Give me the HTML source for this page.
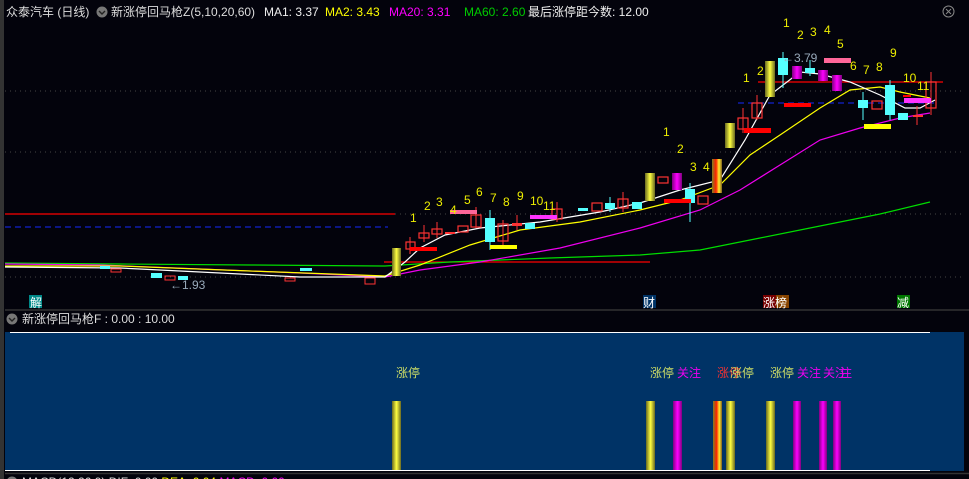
<!DOCTYPE html>
<html><head><meta charset="utf-8"><style>
body{margin:0;background:#03030c;width:969px;height:479px;overflow:hidden;font-family:"Liberation Sans","Noto Sans CJK SC",sans-serif}
svg{position:absolute;left:0;top:0}
</style></head><body>
<svg width="969" height="479" viewBox="0 0 969 479" font-family="Liberation Sans, Noto Sans CJK SC, sans-serif">
<defs>
<linearGradient id="gy" x1="0" x2="1"><stop offset="0" stop-color="#6a6a20"/><stop offset=".5" stop-color="#ffff40"/><stop offset="1" stop-color="#6a6a20"/></linearGradient>
<linearGradient id="gm" x1="0" x2="1"><stop offset="0" stop-color="#800080"/><stop offset=".5" stop-color="#ff00ff"/><stop offset="1" stop-color="#800080"/></linearGradient>
<linearGradient id="gr" x1="0" x2="1"><stop offset="0" stop-color="#808020"/><stop offset=".4" stop-color="#ff2000"/><stop offset=".7" stop-color="#ffee30"/><stop offset="1" stop-color="#806020"/></linearGradient>
</defs>
<rect x="0" y="0" width="4" height="479" fill="#333"/>
<!-- header -->
<text x="6" y="16" font-size="12" fill="#ddd">众泰汽车 (日线)</text>
<circle cx="102" cy="12" r="5.5" fill="#777"/><path d="M99 11l3 3 3-3" stroke="#222" fill="none" stroke-width="1.4"/>
<text x="111" y="16" font-size="12" fill="#ddd">新涨停回马枪Z(5,10,20,60)</text>
<text x="264" y="16" font-size="12" fill="#eee">MA1: 3.37</text>
<text x="325" y="16" font-size="12" fill="#ff0">MA2: 3.43</text>
<text x="389" y="16" font-size="12" fill="#f0f">MA20: 3.31</text>
<text x="464" y="16" font-size="12" fill="#0c0">MA60: 2.60</text>
<text x="528" y="16" font-size="12" fill="#eee">最后涨停距今数: 12.00</text>
<rect x="943" y="6" width="11" height="11" rx="5.5" fill="none" stroke="#888"/><path d="M946 9l5 5M951 9l-5 5" stroke="#888"/>
<!-- grid -->
<g stroke="#444" stroke-dasharray="1 4">
<line x1="5" y1="91" x2="965" y2="91"/><line x1="5" y1="152" x2="965" y2="152"/><line x1="5" y1="214" x2="965" y2="214"/><line x1="5" y1="277" x2="965" y2="277"/>
</g>
<line x1="5" y1="214" x2="395" y2="214" stroke="#f00" stroke-width="1.3"/>
<line x1="5" y1="227" x2="388" y2="227" stroke="#12c" stroke-dasharray="6 4" stroke-width="1.3"/>
<line x1="384" y1="262" x2="650" y2="262" stroke="#f00" stroke-width="1.3"/>
<line x1="758" y1="82" x2="943" y2="82" stroke="#f00" stroke-width="1.3"/>
<line x1="738" y1="103" x2="935" y2="103" stroke="#12c" stroke-dasharray="6 4" stroke-width="1.3"/>
<!-- MAs -->
<polyline fill="none" stroke="#0d0" stroke-width="1.2" points="5,263 120,264 250,265 385,266 450,262 550,258 640,255 700,250 760,238 820,226 880,214 930,202"/>
<polyline fill="none" stroke="#e0e" stroke-width="1.2" points="5,264 100,265 200,269 300,273 385,277 420,270 480,262 560,248 640,228 700,210 740,190 780,165 820,140 860,128 900,118 930,113"/>
<polyline fill="none" stroke="#ff0" stroke-width="1.2" points="5,266 120,266 250,271 385,276 420,265 470,245 520,230 580,222 640,210 680,200 720,185 750,155 780,135 820,108 850,90 880,87 900,92 930,98"/>
<polyline fill="none" stroke="#fff" stroke-width="1.2" points="5,267 120,268 200,272 300,277 385,277 405,262 420,248 445,235 480,228 540,222 600,212 640,203 680,190 720,180 745,140 770,95 800,72 820,74 850,82 880,95 905,108 920,108 935,100"/>
<!-- wicks -->
<g stroke="#f33"><line x1="410" y1="237" x2="410" y2="254"/><line x1="424" y1="225" x2="424" y2="242"/><line x1="437" y1="222" x2="437" y2="238"/><line x1="476" y1="207" x2="476" y2="228"/><line x1="503" y1="220" x2="503" y2="245"/><line x1="517" y1="215" x2="517" y2="230"/><line x1="557" y1="202" x2="557" y2="222"/><line x1="623" y1="192" x2="623" y2="212"/><line x1="743" y1="108" x2="743" y2="133"/><line x1="757" y1="95" x2="757" y2="120"/><line x1="931" y1="72" x2="931" y2="115"/><line x1="917" y1="106" x2="917" y2="125"/></g>
<g stroke="#5ff"><line x1="490" y1="210" x2="490" y2="250"/><line x1="610" y1="197" x2="610" y2="212"/><line x1="690" y1="183" x2="690" y2="222"/><line x1="783" y1="52" x2="783" y2="88"/><line x1="863" y1="92" x2="863" y2="120"/><line x1="890" y1="80" x2="890" y2="120"/><line x1="810" y1="60" x2="810" y2="76"/></g>
<!-- flat candles -->
<g fill="#5ff"><rect x="100" y="266" width="10" height="3"/><rect x="151" y="273" width="11" height="5"/><rect x="178" y="276" width="10" height="4"/><rect x="300" y="268" width="12" height="3"/></g>
<g fill="none" stroke="#f33"><rect x="111" y="269" width="10" height="3"/><rect x="165" y="276" width="10" height="4"/><rect x="285" y="278" width="10" height="3"/><rect x="365" y="278" width="10" height="6"/></g>
<text x="170" y="289" font-size="12" fill="#9ab">←1.93</text>
<!-- rising candles -->
<rect x="392" y="248" width="9" height="28" fill="url(#gy)"/>
<g fill="none" stroke="#f33" stroke-width="1.2">
<rect x="406" y="242" width="9" height="7"/><rect x="419" y="233" width="10" height="5"/><rect x="432" y="229" width="10" height="5"/><rect x="458" y="226" width="10" height="6"/><rect x="471" y="215" width="10" height="12"/><rect x="498" y="224" width="10" height="17"/><rect x="552" y="209" width="10" height="10"/><rect x="592" y="203" width="10" height="8"/><rect x="618" y="199" width="10" height="9"/><rect x="658" y="177" width="10" height="6"/><rect x="698" y="196" width="10" height="8"/><rect x="738" y="118" width="10" height="11"/><rect x="752" y="103" width="10" height="15"/><rect x="872" y="101" width="10" height="8"/><rect x="926" y="82" width="10" height="26"/>
</g>
<g fill="#f33"><rect x="445" y="232" width="10" height="2"/><rect x="512" y="223" width="10" height="3"/><rect x="913" y="115" width="10" height="2"/></g>
<g fill="#5ff"><rect x="485" y="218" width="10" height="24"/><rect x="525" y="223" width="10" height="6"/><rect x="578" y="208" width="10" height="3"/><rect x="605" y="203" width="10" height="6"/><rect x="632" y="202" width="10" height="7"/><rect x="685" y="189" width="10" height="14"/><rect x="778" y="58" width="10" height="17"/><rect x="805" y="68" width="10" height="5"/><rect x="858" y="100" width="10" height="8"/><rect x="885" y="85" width="10" height="30"/><rect x="898" y="113" width="10" height="7"/></g>
<g fill="url(#gy)"><rect x="645" y="173" width="10" height="28"/><rect x="725" y="123" width="10" height="25"/><rect x="765" y="61" width="10" height="36"/></g>
<rect x="712" y="159" width="10" height="34" fill="url(#gr)"/>
<g fill="url(#gm)"><rect x="672" y="173" width="10" height="17"/><rect x="792" y="66" width="10" height="13"/><rect x="818" y="70" width="10" height="11"/><rect x="832" y="75" width="10" height="16"/></g>
<!-- bars -->
<g fill="#f00"><rect x="410" y="247" width="27" height="4"/><rect x="664" y="199" width="27" height="4"/><rect x="744" y="128" width="27" height="5"/><rect x="784" y="103" width="27" height="4"/><rect x="903" y="95" width="8" height="2"/></g>
<rect x="450" y="210" width="27" height="4" fill="#f69"/><rect x="824" y="58" width="27" height="5" fill="#f69"/>
<rect x="490" y="245" width="27" height="4" fill="#ff0"/><rect x="864" y="124" width="27" height="5" fill="#ff0"/>
<rect x="530" y="215" width="27" height="4" fill="#f3f"/><rect x="904" y="98" width="27" height="5" fill="#f3f"/>
<!-- numbers -->
<g font-size="12" fill="#ee0">
<text x="410" y="222">1</text><text x="424" y="210">2</text><text x="436" y="206">3</text><text x="450" y="214">4</text><text x="464" y="204">5</text><text x="476" y="196">6</text><text x="490" y="202">7</text><text x="503" y="206">8</text><text x="517" y="200">9</text><text x="530" y="205">10</text><text x="543" y="210">11</text>
<text x="663" y="136">1</text><text x="677" y="153">2</text><text x="690" y="171">3</text><text x="703" y="171">4</text>
<text x="743" y="82">1</text><text x="757" y="75">2</text><text x="783" y="27">1</text><text x="797" y="39">2</text><text x="810" y="36">3</text><text x="824" y="34">4</text><text x="837" y="48">5</text><text x="850" y="70">6</text><text x="863" y="74">7</text><text x="876" y="71">8</text><text x="890" y="57">9</text><text x="903" y="82">10</text><text x="917" y="90">11</text>
</g>
<text x="782" y="62" font-size="12" fill="#9ab">←3.79</text>
<!-- markers -->
<rect x="29" y="295" width="13" height="13" fill="#088"/><text x="30" y="307" font-size="12" fill="#fff">解</text>
<rect x="643" y="295" width="13" height="13" fill="#036"/><text x="643" y="307" font-size="12" fill="#fff">财</text>
<rect x="763" y="295" width="13" height="13" fill="#700"/><rect x="776" y="295" width="13" height="13" fill="#840"/><text x="763" y="307" font-size="12" fill="#fff">涨榜</text>
<rect x="897" y="295" width="13" height="13" fill="#070"/><text x="897" y="307" font-size="12" fill="#fff">减</text>
<line x1="5" y1="310" x2="969" y2="310" stroke="#333" stroke-width="1.5"/>
<!-- sub panel -->
<circle cx="12" cy="319" r="5.5" fill="#777"/><path d="M9 318l3 3 3-3" stroke="#222" fill="none" stroke-width="1.4"/>
<text x="22" y="323" font-size="12" fill="#ddd">新涨停回马枪F : 0.00 : 10.00</text>
<rect x="5" y="332" width="959" height="139" fill="#003366"/>
<line x1="10" y1="332.5" x2="930" y2="332.5" stroke="#fff"/>
<line x1="5" y1="470.5" x2="930" y2="470.5" stroke="#fff"/>
<g font-size="12"><text x="396" y="377" fill="#cd6">涨停</text><text x="650" y="377" fill="#cd6">涨停</text><text x="677" y="377" fill="#e0e">关注</text><text x="717" y="377" fill="#e33">涨停</text><text x="730" y="377" fill="#cd6">涨停</text><text x="770" y="377" fill="#cd6">涨停</text><text x="797" y="377" fill="#e0e">关注</text><text x="823" y="377" fill="#e0e">关注</text><text x="840" y="377" fill="#e0e">注</text></g>
<g><rect x="392" y="401" width="9" height="69" fill="url(#gy)"/><rect x="646" y="401" width="9" height="69" fill="url(#gy)"/><rect x="673" y="401" width="9" height="69" fill="url(#gm)"/><rect x="713" y="401" width="9" height="69" fill="url(#gr)"/><rect x="726" y="401" width="9" height="69" fill="url(#gy)"/><rect x="766" y="401" width="9" height="69" fill="url(#gy)"/><rect x="793" y="401" width="8" height="69" fill="url(#gm)"/><rect x="819" y="401" width="8" height="69" fill="url(#gm)"/><rect x="833" y="401" width="8" height="69" fill="url(#gm)"/></g>
<line x1="5" y1="473.5" x2="969" y2="473.5" stroke="#333" stroke-width="1.5"/>
<circle cx="12" cy="482" r="5.5" fill="#777"/>
<text x="22" y="486" font-size="12" fill="#ddd">MACD(12,26,9) DIF: 0.00 <tspan fill="#ff0">DEA: 0.04</tspan> <tspan fill="#f0f">MACD: 0.00</tspan></text>
</svg>
</body></html>
